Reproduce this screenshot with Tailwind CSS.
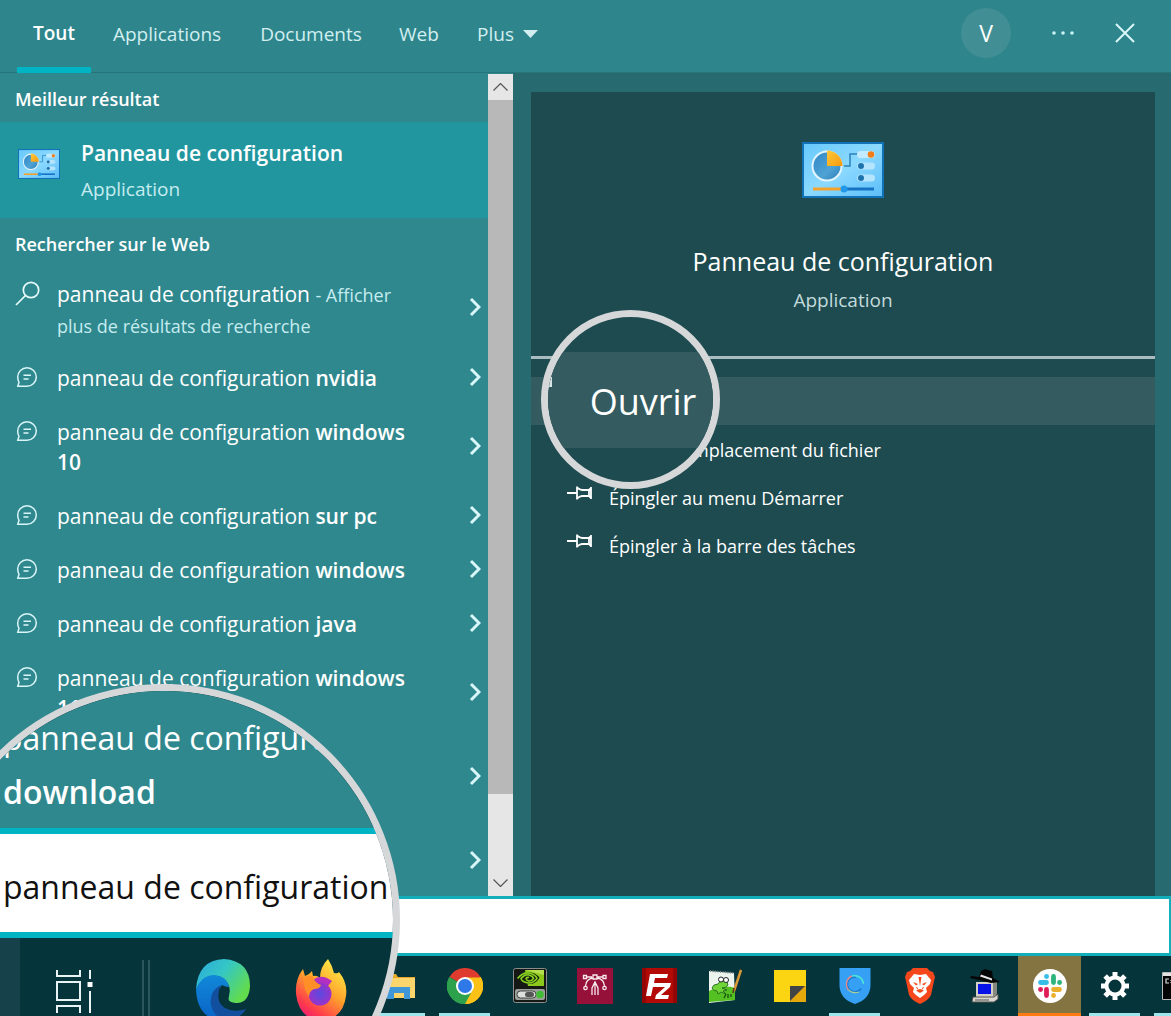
<!DOCTYPE html>
<html lang="fr">
<head>
<meta charset="utf-8">
<title>Recherche - Panneau de configuration</title>
<script src="https://cdn.jsdelivr.net/npm/@tailwindcss/browser@4"></script>
</head>
<body class="relative flex min-h-screen flex-col overflow-hidden bg-[#2f888e] font-['Open_Sans','Noto_Sans',sans-serif] text-white">

<svg class="absolute size-0" aria-hidden="true">
  <defs>
    <linearGradient id="cpBody" x1="0" y1="0" x2="1" y2="1"><stop offset="0" stop-color="#66c8fb"/><stop offset=".5" stop-color="#8bd9ff"/><stop offset="1" stop-color="#5bbdf8"/></linearGradient>
    <linearGradient id="cpPie" x1="0" y1="0" x2="1" y2="1"><stop offset="0" stop-color="#2f86c4"/><stop offset=".6" stop-color="#4ea3d4"/><stop offset="1" stop-color="#2b7cb8"/></linearGradient>
    <linearGradient id="cpSlice" x1="0" y1="0" x2="1" y2="1"><stop offset="0" stop-color="#ffc93c"/><stop offset="1" stop-color="#f59a0c"/></linearGradient>
    <symbol id="control-panel" viewBox="0 0 82 56">
      <rect x="1" y="1" width="80" height="54" fill="url(#cpBody)" stroke="#1272b8" stroke-width="2"/>
      <circle cx="25" cy="24" r="14.500" fill="url(#cpPie)" stroke="#e3f5ff" stroke-width="2"/>
      <path d="M25 24V8.500A15.500 15.500 0 0 1 40.500 24Z" fill="url(#cpSlice)"/>
      <path d="M42 24h6V12h8" fill="none" stroke="#2b83bd" stroke-width="1.500"/>
      <rect x="55" y="9" width="18" height="7" rx="3.500" fill="#c3ebff"/><circle cx="69" cy="12.500" r="3.300" fill="#f07d1a"/>
      <rect x="55" y="20.500" width="18" height="7" rx="3.500" fill="#b5e4fd"/><circle cx="59" cy="24" r="3" fill="#1e73ad"/>
      <rect x="55" y="32.500" width="18" height="7" rx="3.500" fill="#b5e4fd"/><circle cx="59" cy="36" r="3" fill="#1e73ad"/>
      <path d="M11 47h31" stroke="#f3a32c" stroke-width="3"/><path d="M42 47h30" stroke="#1673c4" stroke-width="3"/><circle cx="42" cy="47" r="3.500" fill="#2298ea"/>
    </symbol>
    <symbol id="chat" viewBox="0 0 22 22">
      <path d="M11 20.300A9.300 9.300 0 1 0 1.700 11Q1.700 14 3 16.300L1.800 20.300H11" fill="none" stroke="currentColor" stroke-width="1.500"/>
      <path d="M7.500 9.300h7.500M7.500 13h5" stroke="currentColor" stroke-width="1.500"/>
    </symbol>
    <symbol id="chevron" viewBox="0 0 12 20"><path d="M2 2l8 8-8 8" fill="none" stroke="currentColor" stroke-width="3"/></symbol>
    <symbol id="pin" viewBox="0 0 26 16">
      <path d="M0 8h10M10 1.500v13M10 2.500q3 2.500 5 2.500h7V11h-7q-2 0-5 2.500M24 2v12M22 5l2-2M22 11l2 2" fill="none" stroke="currentColor" stroke-width="1.800"/>
    </symbol>
  </defs>
</svg>

<header class="flex h-[73px] shrink-0 items-stretch border-b border-[#26757b] bg-[#2e868c] pl-[17px] text-[19px] text-[#d3eef0]">
  <nav class="flex gap-5" aria-label="Filtres">
    <button class="h-[73px] w-[74px] border-b-[6px] border-[#00b4c3] font-semibold text-white">Tout</button>
    <button class="w-[112px] pb-1">Applications</button>
    <button class="ml-4 w-[104px] pb-1">Documents</button>
    <button class="ml-4 w-10 pb-1">Web</button>
    <button class="ml-[18px] flex items-center gap-[9px] pb-1">Plus
      <svg class="h-2 w-[15px]" viewBox="0 0 15 8"><path d="M0 0h15L7.500 8z" fill="currentColor"/></svg>
    </button>
  </nav>
  <div class="ml-auto flex items-center gap-10 pr-9 pb-[6px]">
    <button class="size-[50px] rounded-full bg-[#418f95] text-[23px] text-white">V</button>
    <button aria-label="Options"><svg class="h-4 w-6" viewBox="0 0 24 16" fill="#c9f2f4"><circle cx="3" cy="8" r="1.800"/><circle cx="12" cy="8" r="1.800"/><circle cx="21" cy="8" r="1.800"/></svg></button>
    <button aria-label="Fermer"><svg class="size-5" viewBox="0 0 20 20" fill="none" stroke="#d9f7f8" stroke-width="2"><path d="M1 1l18 18M19 1L1 19"/></svg></button>
  </div>
</header>

<main class="flex h-[823px] shrink-0 grow">
  <section class="flex w-[488px] shrink-0 flex-col overflow-hidden">
    <h2 class="flex h-[49px] shrink-0 items-center pt-[3px] pl-[15px] text-[18px] font-semibold">Meilleur résultat</h2>
    <a href="#" class="flex h-24 shrink-0 items-center gap-[21px] bg-[#22969f] pl-[18px]">
      <svg class="mb-3 h-[30px] w-[42px]" viewBox="0 0 82 56" preserveAspectRatio="none"><use href="#control-panel"/></svg>
      <span class="flex flex-col pt-px">
        <span class="text-[21px] leading-9 font-semibold">Panneau de configuration</span>
        <span class="text-[19px] leading-9 text-[#c5ecef]">Application</span>
      </span>
    </a>
    <h2 class="flex h-[49px] shrink-0 items-center pt-[3px] pl-[15px] text-[18px] font-semibold">Rechercher sur le Web</h2>
    <ul class="text-[21px] leading-[30px]">
      <li><a href="#" class="flex h-[84px] pt-3 pr-[7px] pl-[15px]">
        <svg class="mt-[2px] mr-[17px] size-[25px] shrink-0" viewBox="0 0 25 25" fill="none" stroke="#e8fbfc" stroke-width="1.700"><circle cx="16" cy="9" r="7.700"/><path d="M10.500 14.500L1 24"/></svg>
        <span class="w-[370px]">panneau de configuration <span class="text-[18px] text-[#c5ecef]">- Afficher<br>plus de résultats de recherche</span></span>
        <svg class="mt-[18px] ml-auto h-5 w-3 text-[#d9f6f8]"><use href="#chevron"/></svg></a></li>
      <li><a href="#" class="flex h-[54px] items-center pr-[7px] pl-4">
        <svg class="mr-[19px] mb-[2px] size-[22px] shrink-0 text-[#d9f6f8]"><use href="#chat"/></svg>
        <span>panneau de configuration <b class="font-semibold">nvidia</b></span>
        <svg class="mb-[2px] ml-auto h-5 w-3 text-[#d9f6f8]"><use href="#chevron"/></svg></a></li>
      <li><a href="#" class="flex h-[84px] items-center pr-[7px] pl-4">
        <svg class="mt-[15px] mr-[19px] size-[22px] shrink-0 self-start text-[#d9f6f8]"><use href="#chat"/></svg>
        <span>panneau de configuration <b class="font-semibold">windows<br>10</b></span>
        <svg class="mb-[2px] ml-auto h-5 w-3 text-[#d9f6f8]"><use href="#chevron"/></svg></a></li>
      <li><a href="#" class="flex h-[54px] items-center pr-[7px] pl-4">
        <svg class="mr-[19px] mb-[2px] size-[22px] shrink-0 text-[#d9f6f8]"><use href="#chat"/></svg>
        <span>panneau de configuration <b class="font-semibold">sur pc</b></span>
        <svg class="mb-[2px] ml-auto h-5 w-3 text-[#d9f6f8]"><use href="#chevron"/></svg></a></li>
      <li><a href="#" class="flex h-[54px] items-center pr-[7px] pl-4">
        <svg class="mr-[19px] mb-[2px] size-[22px] shrink-0 text-[#d9f6f8]"><use href="#chat"/></svg>
        <span>panneau de configuration <b class="font-semibold">windows</b></span>
        <svg class="mb-[2px] ml-auto h-5 w-3 text-[#d9f6f8]"><use href="#chevron"/></svg></a></li>
      <li><a href="#" class="flex h-[54px] items-center pr-[7px] pl-4">
        <svg class="mr-[19px] mb-[2px] size-[22px] shrink-0 text-[#d9f6f8]"><use href="#chat"/></svg>
        <span>panneau de configuration <b class="font-semibold">java</b></span>
        <svg class="mb-[2px] ml-auto h-5 w-3 text-[#d9f6f8]"><use href="#chevron"/></svg></a></li>
      <li><a href="#" class="flex h-[84px] items-center pr-[7px] pl-4">
        <svg class="mt-[15px] mr-[19px] size-[22px] shrink-0 self-start text-[#d9f6f8]"><use href="#chat"/></svg>
        <span>panneau de configuration <b class="font-semibold">windows<br>11</b></span>
        <svg class="mb-[2px] ml-auto h-5 w-3 text-[#d9f6f8]"><use href="#chevron"/></svg></a></li>
      <li><a href="#" aria-label="Suggestion suivante" class="flex h-[84px] items-center pr-[7px] pl-4">
        <svg class="mb-[2px] ml-auto h-5 w-3 text-[#d9f6f8]"><use href="#chevron"/></svg></a></li>
      <li><a href="#" aria-label="panneau de configuration download" class="flex h-[84px] items-center pr-[7px] pl-4">
        <svg class="mb-[2px] ml-auto h-5 w-3 text-[#d9f6f8]"><use href="#chevron"/></svg></a></li>
    </ul>
  </section>

  <div class="mt-px flex w-[25px] shrink-0 flex-col bg-[#e6e6e6] text-[#555]">
    <button aria-label="Défiler vers le haut" class="flex h-[26px] items-center justify-center"><svg class="h-2 w-[15px]" viewBox="0 0 15 8" fill="none" stroke="currentColor" stroke-width="1.200"><path d="M.5 7.500l7-7 7 7"/></svg></button>
    <div class="h-[694px] bg-[#b8b8b8]"></div>
    <button aria-label="Défiler vers le bas" class="mt-auto flex h-[26px] items-center justify-center"><svg class="h-2 w-[15px]" viewBox="0 0 15 8" fill="none" stroke="currentColor" stroke-width="1.200"><path d="M.5.5l7 7 7-7"/></svg></button>
  </div>

  <div class="flex flex-1 bg-[#276b70] pt-[19px] pr-4 pl-[18px]">
    <section class="relative flex flex-1 flex-col bg-[#1d4b4f]">
      <div class="flex h-[264px] flex-col items-center pt-[50px]">
        <svg class="h-14 w-[82px]"><use href="#control-panel"/></svg>
        <h1 class="mt-[45px] text-[25px] leading-9">Panneau de configuration</h1>
        <p class="mt-[3px] text-[19px] leading-9 text-[#c3dadc]">Application</p>
      </div>
      <hr class="mb-[18px] h-[3px] border-0 bg-[#a9bcc0]">
      <ul class="text-[18px] leading-6">
        <li><button aria-label="Ouvrir" class="block h-12 w-full bg-[#345c60]"></button></li>
        <li><button aria-label="Ouvrir l'emplacement du fichier" class="flex h-12 w-full items-center pt-[2px] pl-[161px]">mplacement du fichier</button></li>
        <li><button class="flex h-12 w-full items-center gap-4 pt-[2px] pl-9"><svg class="mb-[10px] h-4 w-[26px]"><use href="#pin"/></svg>Épingler au menu Démarrer</button></li>
        <li><button class="flex h-12 w-full items-center gap-4 pt-[2px] pl-9"><svg class="mb-[10px] h-4 w-[26px]"><use href="#pin"/></svg>Épingler à la barre des tâches</button></li>
      </ul>

      <!-- magnifier over the "Ouvrir" action -->
      <div class="absolute top-[218px] left-[10px] flex size-[179px] flex-col justify-center overflow-hidden rounded-full border-[7px] border-[#d6d7d9] bg-[#1d4b4f]">
        <div class="flex h-24 items-center justify-center bg-[#345c60] pt-1 pl-[25px] text-[36px]">Ouvrir</div>
        <div class="absolute top-[60px] left-0 h-[10px] w-[4px] bg-[#d6e4e6]"></div>
      </div>
    </section>
  </div>
</main>

<div class="h-[60px] shrink-0 border-y-[3px] border-r-2 border-[#12aeba] bg-white">
  <input type="text" aria-label="Rechercher" class="block h-full w-full bg-white pl-[410px] text-[21px] text-black outline-none">
</div>

<footer class="flex h-[60px] shrink-0 gap-[2px] overflow-hidden bg-[#05343a] pl-[368px]">
  <button aria-label="Explorateur de fichiers" class="flex w-[63px] shrink-0 flex-col items-center justify-between pt-[14px]">
    <svg class="h-8 w-[34px]" viewBox="0 0 34 32"><path d="M0 4h13l2 3h17v21H0z" fill="#e7a92c"/><path d="M0 8h32v20H0z" fill="#fcd56c"/><path d="M4 29V17h23v12h-6v-6H11v6z" fill="#3f97d8"/></svg>
    <span class="h-[3px] w-[51px] bg-[#9fe5ec]"></span></button>
  <button aria-label="Chrome" class="flex w-[63px] shrink-0 flex-col items-center justify-between pt-3">
    <svg class="size-9" viewBox="0 0 36 36"><path d="M18 18L2.400 9A18 18 0 0 1 33.600 9z" fill="#df3b2f"/><path d="M18 18L33.600 9A18 18 0 0 1 18 36z" fill="#fbc116"/><path d="M18 18v18A18 18 0 0 1 2.400 9z" fill="#2da14c"/><path d="M18 9.500h16A18 18 0 0 1 18 36l7.500-14z" fill="#fbc116"/><path d="M2.400 9l8 13.500L18 26.500 25.500 22 18 36A18 18 0 0 1 2.400 9z" fill="#2da14c"/><circle cx="18" cy="18" r="9" fill="#fff"/><circle cx="18" cy="18" r="7" fill="#2f78e8"/></svg>
    <span class="h-[3px] w-[51px] bg-[#9fe5ec]"></span></button>
  <button aria-label="NVIDIA" class="flex w-[63px] shrink-0 justify-center pt-3">
    <svg class="h-[35px] w-[34px]" viewBox="0 0 34 35"><rect x=".5" y=".5" width="33" height="34" rx="2" fill="#151815" stroke="#8a8d8a"/><path d="M12 2h19v16H15z" fill="#8cc81c"/><path d="M12 2h19v5z" fill="#b4e04e"/><path d="M3.500 10Q10 3 18 4.500q7 2 8.500 5.500-4 6-10 6-9 0-13-6z" fill="#14220a"/><path d="M4.500 10.500Q11 3 18 5.500q5 2 6 5-4 5-9 4.500-6-1-7-4.500 4-5 8-3.500 4 1 4.500 3.500-2 3-5 2.500-2.500-1-2.500-2.500 1-1.500 3-1" fill="none" stroke="#8ad222" stroke-width="1.500"/><rect x="2" y="21" width="30" height="11" rx="2" fill="#9ba09b"/><rect x="4" y="23" width="19" height="7" rx="3.500" fill="#dde0dd" stroke="#444"/><rect x="12" y="24" width="9" height="5" rx="2.500" fill="#555"/><circle cx="27" cy="26.500" r="3.800" fill="#41bd35"/></svg></button>
  <button aria-label="Éditeur vectoriel" class="flex w-[63px] shrink-0 justify-center pt-3">
    <svg class="size-9" viewBox="0 0 36 36" fill="none" stroke="#f8eaef" stroke-width="1.300"><path d="M0 0h36v36H0z" fill="#961139" stroke="none"/><path d="M10 9h5M20 9h6M16 10Q9 11 8.500 18M20 10q7 1 7.500 8M15 27v-7l3-6 3 6v7M18 15v12"/><path d="M16 7h4v4h-4zM6.500 7.500h3v3h-3zM26 7.500h3v3h-3z"/><circle cx="8.500" cy="20" r="1.700"/><circle cx="27.500" cy="20" r="1.700"/></svg></button>
  <button aria-label="FileZilla" class="flex w-[63px] shrink-0 justify-center pt-3">
    <svg class="size-[35px]" viewBox="0 0 35 35"><path d="M0 0h35v35H0z" fill="#b30a06"/><path d="M0 0h4v35H0zM31 0h4v35h-4z" fill="#930604"/><path d="M8 6h18l-1 4H13l-1 5h8l-1 4h-8l-2 9H4z" fill="#fff"/><path d="M17 15h12l-1 4-9 8h8l-1 4H13l1-4 9-8h-7z" fill="#fff"/></svg></button>
  <button aria-label="Notepad++" class="flex w-[63px] shrink-0 justify-center pt-[13px]">
    <svg class="h-[34px] w-[34px]" viewBox="0 0 34 34"><path d="M1 2l25 2 1 27-26 3z" fill="#edf4ee"/><path d="M1 22q13-7 26-3v12L1 33z" fill="#55c022"/><path d="M2 2l24 2" stroke="#888" stroke-width="2" stroke-dasharray="1 1.500"/><path d="M4 19q1-4 6-4 2-4 6-4 4 1 4 5-2 3-6 3l5 2-4 1 3 3-5-2-3 2-1-3q-4 0-5-3z" fill="#6fd436" stroke="#1d5c1d" stroke-width=".8"/><circle cx="13" cy="10.500" r="2.500" fill="#fff" stroke="#222"/><circle cx="18" cy="11" r="2.500" fill="#fff" stroke="#222"/><path d="M16 29l2-4M20 29v-4M23 28v-3" stroke="#174d12" stroke-width="1.300"/><path d="M33 1L26 22" stroke="#dc9735" stroke-width="2.500"/><path d="M26 19l-1 5" stroke="#553818" stroke-width="1.500"/></svg></button>
  <button aria-label="Pense-bête" class="flex w-[63px] shrink-0 justify-center pt-[14px]">
    <svg class="size-8" viewBox="0 0 32 32"><path d="M0 0h32v32H0z" fill="#fbd512"/><path d="M16 16h16v16H16z" fill="#e5a90b"/><path d="M16 16h15L16 31z" fill="#414347"/></svg></button>
  <button aria-label="VPN" class="flex w-[63px] shrink-0 flex-col items-center justify-between pt-3">
    <svg class="h-9 w-8" viewBox="0 0 32 36"><path d="M.5 0h31v17q0 14-15.500 19Q.5 31 .5 17z" fill="#35a0f4"/><path d="M22 20.500A7.500 7.500 0 1 1 17 9" fill="none" stroke="#1b7cd2" stroke-width="2"/><path d="M9.500 22A9 9 0 0 1 13 8" fill="none" stroke="#e58a8a" stroke-width="1.400"/><path d="M13 8A9 9 0 0 1 24.500 16" fill="none" stroke="#4be2dc" stroke-width="1.600"/><path d="M9.500 22Q14 26 20 24" fill="none" stroke="#a9cf9c" stroke-width="1.200"/></svg>
    <span class="h-[3px] w-[51px] bg-[#9fe5ec]"></span></button>
  <button aria-label="Brave" class="flex w-[63px] shrink-0 justify-center pt-3">
    <svg class="h-9 w-[30px]" viewBox="0 0 30 36"><path d="M8 0h14l3 3 3 1 2 5-1 4-3 14q-2 5-11 9Q6 32 4 27L1 13 0 9l2-5 3-1z" fill="#f4481c"/><path d="M9 6l6 1 6-1 5 6-1 4-4 4 1 4-3 3-4 3-4-3-3-3 1-4-4-4-1-4z" fill="#fff"/><path d="M8 14l5 2-2 1.500zM22 14l-5 2 2 1.500zM13.500 9L15 18l1.500-9zM11 22.500l4-1.500 4 1.500-4 2.500z" fill="#f4481c"/><path d="M11.500 19l1.500 2.500M18.500 19L17 21.500" stroke="#f4481c"/></svg></button>
  <button aria-label="PuTTY" class="flex w-[63px] shrink-0 justify-center pt-[13px]">
    <svg class="h-[34px] w-8" viewBox="0 0 32 34"><path d="M7 13h20v15H7z" fill="#d4d0c8"/><path d="M24 13l4-2v14l-4 3z" fill="#87877f"/><path d="M9 15h13v10H9z" fill="#0712e8"/><path d="M4 28h21l4-3v5l-4 3H3z" fill="#d9d6cf" stroke="#54544e"/><path d="M6 31h14" stroke="#555" stroke-width="1"/><path d="M10 8l2-6 4-2 3 1 4 1 1 7 7 4-9 1-12-3L1 9l1-2z" fill="#050505"/><path d="M12 5.500l11 4v2L11 7.500z" fill="#e5e5e5"/></svg></button>
  <button aria-label="Slack" class="flex w-[63px] shrink-0 flex-col items-center justify-between bg-[#837442] pt-[13px]">
    <svg class="size-[34px]" viewBox="0 0 34 34"><circle cx="17" cy="17" r="17" fill="#fff"/><g fill="none" stroke-width="4.800" stroke-linecap="round"><path d="M7.500 13.500h6M13.500 7.500h.1" stroke="#36bde8"/><path d="M20.500 7.500v6M26.500 13.500h.1" stroke="#2eb57d"/><path d="M20.500 20.500h6M20.500 26.500h.1" stroke="#ebb02d"/><path d="M13.500 20.500v6M7.500 20.500h.1" stroke="#df1d59"/></g></svg>
    <span class="h-[3px] w-full bg-[#ff7a10]"></span></button>
  <button aria-label="Paramètres" class="flex w-[63px] shrink-0 flex-col items-center justify-between pt-4">
    <svg class="size-7" viewBox="0 0 28 28"><circle cx="14" cy="14" r="8.500" fill="none" stroke="#fff" stroke-width="4"/><g stroke="#fff" stroke-width="5"><path d="M14 0v5M14 23v5M0 14h5M23 14h5M4.100 4.100l3.500 3.500M20.400 20.400l3.500 3.500M4.100 23.900l3.500-3.500M20.400 7.600l3.500-3.500"/></g></svg>
    <span class="h-[3px] w-[51px] bg-[#9fe5ec]"></span></button>
  <button aria-label="Invite de commandes" class="flex w-[63px] shrink-0 flex-col items-center justify-between pt-4">
    <svg class="h-7 w-9" viewBox="0 0 36 28"><path d="M.5.5h35v27H.5z" fill="#050505" stroke="#b9b9b9"/><path d="M1 1h34v3H1z" fill="#e4e4e4"/><path d="M7 7H4v4h3M9 8v1M9 10v1" fill="none" stroke="#ddd" stroke-width="1.200"/></svg>
    <span class="h-[3px] w-[51px] bg-[#9fe5ec]"></span></button>
</footer>

<!-- magnifier over the search box, cut off by the left and bottom edges -->
<div class="pointer-events-none absolute bottom-0 left-0 h-[332px] w-[400px] overflow-hidden">
  <div class="-ml-[72px] size-[472px] overflow-hidden rounded-full border-[7px] border-[#d6d7d9] bg-[#05343a] whitespace-nowrap">
    <div class="h-[137px] bg-[#2f888e] pt-5 pl-[68px] text-[32px] leading-[54px]">
      <p>panneau de configuration</p>
      <p class="font-semibold">download</p>
    </div>
    <div class="flex h-[110px] items-center border-y-[6px] border-[#00b4c3] bg-white pt-2 pl-[68px] text-[32px] text-[#111]">panneau de configuration</div>
    <div class="flex h-[211px] pl-[65px]">
      <div class="w-5 bg-[#16414a]"></div>
      <svg class="mt-[31px] ml-[35px] h-[46px] w-10" viewBox="0 0 40 46" fill="none" stroke="#eaf3f4" stroke-width="2"><path d="M2 1v6h23V1M2 13h23v18H2zM2 44v-7h23v7M35 1v9M35 22v22"/><path d="M32.500 13h5v5h-5z" fill="#fff" stroke="none"/></svg>
      <div class="mt-[22px] ml-[47px] h-20 w-2 border-x-2 border-[#2a555a]"></div>
      <svg class="mt-[21px] ml-[46px] h-[62px] w-[54px]" viewBox="0 0 54 62">
        <defs><linearGradient id="edgeTop" x1="0" y1="0" x2="1" y2=".6"><stop offset="0" stop-color="#2ba9e0"/><stop offset=".5" stop-color="#35c7c4"/><stop offset="1" stop-color="#62dc4c"/></linearGradient><linearGradient id="edgeLow" x1="0" y1="0" x2="0" y2="1"><stop offset="0" stop-color="#1089d8"/><stop offset="1" stop-color="#0b62c6"/></linearGradient></defs>
        <path d="M0 30Q2 1 28 0 54 2 54 27 53 43 42 44 30 44 33 37 36 27 28 20 16 10 0 30z" fill="url(#edgeTop)"/>
        <path d="M0 30Q6 16 18 16 31 17 33 28 20 25 20 40 22 56 40 58 33 62 27 62 1 60 0 30z" fill="url(#edgeLow)"/>
        <path d="M15 46Q13 32 25 26 18 42 29 49 38 54 50 50 44 60 33 61 18 60 15 46z" fill="#134f9f"/>
        <path d="M26 26Q34 28 32.500 37 31 43 36 44.500 44 45 50 43 50 48 42 50 31 51 26 44 20 33 26 26z" fill="#05343a"/>
      </svg>
      <svg class="mt-[21px] ml-[45px] h-[62px] w-[52px]" viewBox="0 0 52 62">
        <defs><linearGradient id="foxFlame" x1=".8" y1="0" x2=".2" y2="1"><stop offset="0" stop-color="#fff04a"/><stop offset=".45" stop-color="#ffa32a"/><stop offset=".8" stop-color="#ff3b4c"/><stop offset="1" stop-color="#e9177a"/></linearGradient><radialGradient id="foxGlobe"><stop offset="0" stop-color="#5a49e0"/><stop offset="1" stop-color="#9a33c8"/></radialGradient></defs>
        <path d="M1 35Q0 20 8 10L10 17Q14 16 17 12L18 17Q22 16 25 19 25 8 33 0 37 6 39 14 43 15 44 13 53 24 51 37 48 60 26 62 4 60 1 35z" fill="url(#foxFlame)"/>
        <path d="M18 21Q26 14 37 22L33 27H22z" fill="#b32fc0"/>
        <circle cx="25" cy="35" r="11.500" fill="url(#foxGlobe)"/>
        <path d="M9 19q5-4 9-1 2 6 8 8-1 4-7 4-5 2-5 8-6-8-5-19z" fill="#ff8f26"/>
      </svg>
    </div>
  </div>
</div>
</body>
</html>
